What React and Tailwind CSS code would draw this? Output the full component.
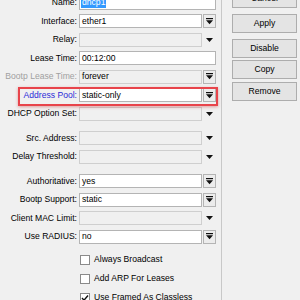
import React from 'react';

const font = { fontFamily: '"Liberation Sans", Arial, sans-serif' };

const BarArrow = () => (
  <svg width="7" height="7" viewBox="0 0 7 7">
    <rect x="0" y="0" width="7" height="1.2" fill="#111" />
    <polygon points="0,2.2 7,2.2 3.5,6.2" fill="#111" />
  </svg>
);

const Arrow = () => (
  <svg width="7" height="4" viewBox="0 0 7 4">
    <polygon points="0,0 7,0 3.5,4" fill="#111" />
  </svg>
);

const Row = ({ label, labelClass = 'text-black', value, kind, disabled, selected }) => (
  <div className="flex items-center h-[14px]">
    <div className={`w-[77px] text-right whitespace-nowrap leading-none ${labelClass}`}>{label}</div>
    <div className="ml-[2px] flex h-full">
      <div
        className={`h-full border flex items-center pl-[2px] leading-none ${
          disabled ? 'bg-[#f0f0f0] border-[#cfcfcf]' : 'bg-white border-[#b4b4b4]'
        } ${kind === 'full' ? 'w-[137px]' : 'w-[123px]'}`}
      >
        {selected ? (
          <span className="bg-[#3399ff] text-white px-[1px] -ml-[1px] h-[11px] flex items-center">{value}</span>
        ) : (
          value
        )}
      </div>
      {kind === 'btn' && (
        <div className="ml-px w-[13px] h-full border border-[#b4b4b4] bg-[#ececec] flex items-center justify-center">
          <BarArrow />
        </div>
      )}
      {kind === 'arrow' && (
        <div className="ml-px w-[13px] h-full flex items-center justify-center">
          <Arrow />
        </div>
      )}
    </div>
  </div>
);

const Sep = ({ className }) => <div className={`ml-[5px] w-[212px] h-px bg-[#d4d4d4] ${className}`} />;

const Check = ({ label, checked }) => (
  <div className="flex items-center ml-[80px] h-[10px]">
    <div className="w-[10px] h-[10px] border border-[#8a8a8a] bg-white flex items-center justify-center">
      {checked && (
        <svg width="8" height="8" viewBox="0 0 8 8">
          <path d="M1 4 L3 6.2 L7 1.5" stroke="#111" strokeWidth="1.4" fill="none" />
        </svg>
      )}
    </div>
    <span className="ml-[4px] leading-none whitespace-nowrap">{label}</span>
  </div>
);

const Btn = ({ children, className = '' }) => (
  <div className={`w-[65px] h-[19px] border border-[#adadad] bg-[#e4e4e4] flex items-center justify-center leading-none ${className}`}>
    {children}
  </div>
);

export default function App() {
  return (
    <div className="w-[300px] h-[300px] overflow-hidden bg-[#f0f0f0] flex text-[8.6px] text-black" style={font}>
      <div className="w-[221px] flex flex-col -mt-[4.5px]">
        <div className="flex flex-col gap-[4.5px]">
          <Row label="Name:" value="dhcp1" kind="full" selected />
          <Row label="Interface:" value="ether1" kind="btn" />
          <Row label="Relay:" kind="arrow" disabled />
          <Row label="Lease Time:" value="00:12:00" kind="full" />
          <Row label="Bootp Lease Time:" labelClass="text-[#a0a0a0]" value="forever" kind="btn" disabled />
          <div className="relative">
            <Row label="Address Pool:" labelClass="text-[#2b2bd8]" value="static-only" kind="btn" />
            <div className="absolute left-[18px] top-[-1px] w-[200px] h-[19px] border-2 border-[#e8444b] shadow-[0_1px_3px_rgba(200,60,60,0.45)]" />
          </div>
          <Row label="DHCP Option Set:" kind="arrow" disabled />
        </div>
        <Sep className="mt-[6px]" />
        <div className="flex flex-col gap-[4.5px] mt-[4.5px]">
          <Row label="Src. Address:" kind="arrow" disabled />
          <Row label="Delay Threshold:" kind="arrow" disabled />
        </div>
        <Sep className="mt-[5.5px]" />
        <div className="flex flex-col gap-[4.5px] mt-[5px]">
          <Row label="Authoritative:" value="yes" kind="btn" />
          <Row label="Bootp Support:" value="static" kind="btn" />
          <Row label="Client MAC Limit:" kind="arrow" disabled />
          <Row label="Use RADIUS:" value="no" kind="btn" />
        </div>
        <Sep className="mt-[4.5px]" />
        <div className="flex flex-col gap-[9px] mt-[6.5px]">
          <Check label="Always Broadcast" />
          <Check label="Add ARP For Leases" />
          <Check label="Use Framed As Classless" checked />
        </div>
      </div>
      <div className="w-px h-full bg-[#c8c8c8]" />
      <div className="flex flex-col pl-[10px] -mt-[11.5px]">
        <Btn>Cancel</Btn>
        <Btn className="mt-[6px]">Apply</Btn>
        <Btn className="mt-[6.5px]">Disable</Btn>
        <Btn className="mt-[2px]">Copy</Btn>
        <Btn className="mt-[3px]">Remove</Btn>
      </div>
    </div>
  );
}
